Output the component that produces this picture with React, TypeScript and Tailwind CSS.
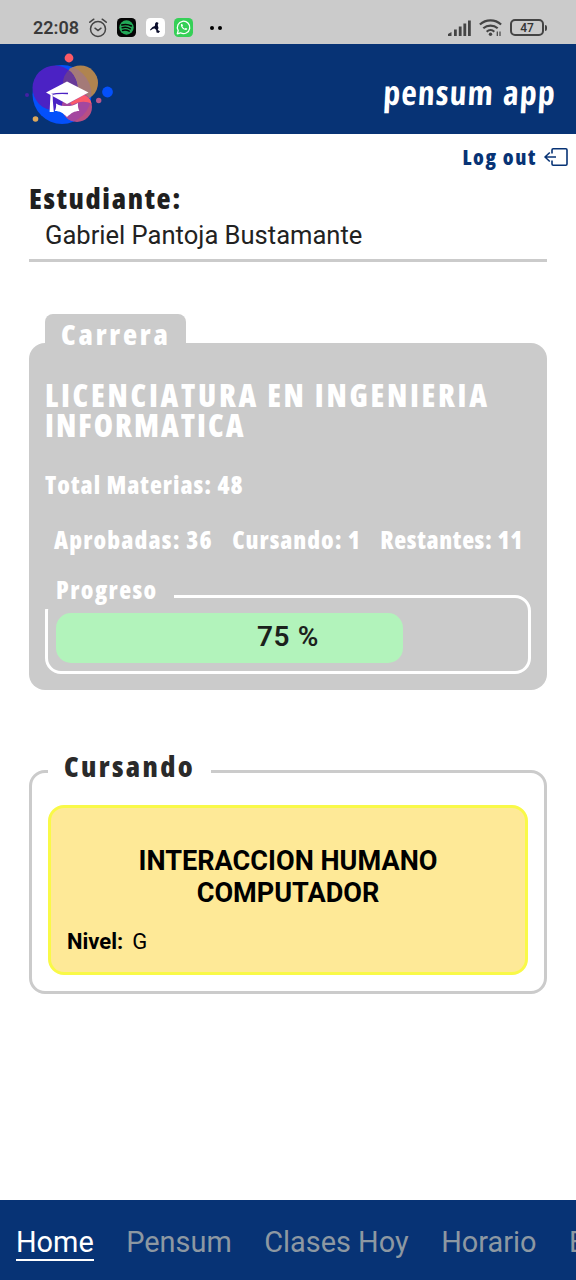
import React from 'react';

const display = "font-['Open_Sans',sans-serif] font-extrabold [font-stretch:75%] whitespace-nowrap";

function StatusBar() {
  return (
    <div className="flex h-11 items-center bg-[#cbcbcb] pl-[33px] pr-[29px] pt-[11px]">
      <span className="w-[56px] text-[18px] font-semibold leading-none text-[#3a3a3a]">22:08</span>
      <svg className="h-5 w-[18px]" viewBox="0 0 18 20" fill="none" stroke="#444" strokeWidth="1.5" strokeLinecap="round">
        <circle cx="9" cy="11" r="7.5" />
        <path d="M6 10.2l3 2.3 3-2.3M.8 4.2L4.8 1.2M17.2 4.2L13.2 1.2" />
      </svg>
      <svg className="ml-[10px] size-[19px]" viewBox="0 0 19 19" fill="none" strokeLinecap="round">
        <rect width="19" height="19" rx="4.5" fill="#050505" />
        <circle cx="9.5" cy="9.5" r="7.2" fill="#22a957" />
        <path d="M4.8 7c3.2-1 6.7-.6 9.6 1M5.2 9.8c2.8-.8 5.8-.4 8.2 1M5.6 12.4c2.4-.6 4.6-.3 6.6.8" stroke="#050505" strokeWidth="1.5" />
      </svg>
      <svg className="ml-[10px] size-[19px]" viewBox="0 0 19 19">
        <rect width="19" height="19" rx="4.5" fill="#fff" />
        <path d="M9.3 5l1.5-1 1.7 1-.8 2 .8 3-.8 2 2.3 1.2-1.5 1.8-2-.5-.3-2.5-1.500-1.500-1.700.2L4.500 12.500l-.5-.7L6.500 9l2.300-1z" fill="#0a0d2a" />
      </svg>
      <svg className="ml-[9px] size-[19px]" viewBox="0 0 19 19" fill="none" stroke="#fff">
        <rect width="19" height="19" rx="4.5" fill="#35d057" stroke="none" />
        <path d="M3.300 15.800l.9-3.300a6.200 6.200 0 1 1 2.300 2.300z" strokeWidth="1.300" strokeLinejoin="round" />
        <path d="M6.900 6.500c-.3 2.600 2.600 5.700 5.400 5.500.8-.5 1-.9.800-1.400l-1.500-.7-.8.800c-1.100-.4-1.900-1.200-2.400-2.200l.6-.8-.6-1.500c-.5-.3-1.100-.2-1.500.3z" fill="#fff" stroke="none" />
      </svg>
      <span className="ml-[17px] size-[4px] rounded-full bg-black" />
      <span className="ml-[4px] size-[4px] rounded-full bg-black" />
      <svg className="ml-auto h-4 w-[23px]" viewBox="0 0 23 16" fill="#444">
        <path d="M0 14l3.500-2v4H0zM6 9.500h2.800V16H6zM10.800 6.500h2.800V16h-2.800zM15.400 3.500h2.800V16h-2.800zM20 .5h2.800V16H20z" />
      </svg>
      <svg className="ml-[8px] h-[18px] w-[23px]" viewBox="0 0 23 18" fill="none" stroke="#444" strokeWidth="2.200">
        <path d="M.9 5.500c6-5.500 15.200-5.500 21.200 0M4.300 9.300c4.100-3.700 10.300-3.700 14.400 0M7.700 12.700c2.200-2 5.400-2 7.600 0" />
        <circle cx="11.500" cy="15.200" r="1.700" fill="#444" stroke="none" />
        <path d="M18.300 12.500V17M21 12.500V17" strokeWidth="1.200" />
      </svg>
      <div className="ml-[8px] flex h-[17px] w-[34px] items-center justify-center rounded-[5px] border-2 border-[#444] text-[12px] font-medium leading-none text-[#333]">47</div>
      <span className="ml-px h-1.5 w-0.5 rounded-r bg-[#444]" />
    </div>
  );
}

function Logo() {
  return (
    <svg className="h-[72px] w-[92px]" viewBox="24 52 92 72">
      <defs>
        <clipPath id="gold"><circle cx="80.500" cy="83" r="17.500" /></clipPath>
        <clipPath id="rose"><circle cx="77" cy="107" r="15" /></clipPath>
      </defs>
      <circle cx="62" cy="94.500" r="29.500" fill="#0450fb" />
      <circle cx="80.500" cy="83" r="17.500" fill="#b0844f" />
      <circle cx="62" cy="94.500" r="29.500" fill="#a47a78" clipPath="url(#gold)" />
      <circle cx="55" cy="88" r="22.500" fill="#4b22c4" />
      <circle cx="55" cy="88" r="22.500" fill="#683a98" clipPath="url(#gold)" />
      <circle cx="77" cy="107" r="15" fill="#b84f83" />
      <circle cx="62" cy="94.500" r="29.500" fill="#a4479f" clipPath="url(#rose)" />
      <path d="M70 103l14-8c5 2 7 5 8 9-6-3-12-3-20 1z" fill="#fb5a6a" clipPath="url(#rose)" />
      <circle cx="69" cy="58" r="4.400" fill="#fb5a66" />
      <circle cx="107.500" cy="92" r="5.400" fill="#0450fb" />
      <circle cx="98.700" cy="100.500" r="2.700" fill="#b8578c" />
      <circle cx="35.500" cy="119" r="2.800" fill="#dda85b" />
      <circle cx="27" cy="95" r="2" fill="#4421a4" />
      <path d="M46 92.500L67 81.500l21.500 11L67 104z" fill="#fff" />
      <path d="M68 93.500c-6-.3-12-.3-16 .8v3" fill="none" stroke="#4b22c4" strokeWidth="1.300" />
      <path d="M50.600 94h2l.3 7.500.9 10.500h-4.200l.5-10.500zM56 103.500c4 2.500 7 2.500 11 2.500s7-.5 11-3c-.3 3 .2 5.500 1.300 8-5 0-8 2-12.300 6-4-4-7-6-12.200-6 1.200-2.500 1.600-4.800 1.200-7.500z" fill="#fff" />
    </svg>
  );
}

function Header() {
  return (
    <header className="flex h-[90px] items-start justify-between bg-[#073375] pl-6 pr-[19px] pt-2">
      <Logo />
      <h1 className="-skew-x-3 pt-[22px] font-['Open_Sans',sans-serif] text-[34px] font-bold leading-9 tracking-[1px] whitespace-nowrap text-white [font-stretch:75%] [word-spacing:2px]">
        pensum app
      </h1>
    </header>
  );
}

function Stat({ children }: { children: React.ReactNode }) {
  return <span className={`${display} text-[24.500px] leading-[30px]`}>{children}</span>;
}

function CareerCard() {
  return (
    <section className="mt-[52px] text-white">
      <div className="ml-4 h-[29px] w-[141px] rounded-t-lg bg-[#cbcbcb] pl-[16px]">
        <h2 className={`${display} relative text-[29px] leading-[40px] tracking-[2.800px]`}>Carrera</h2>
      </div>
      <div className="h-[347px] rounded-2xl bg-[#cbcbcb] px-4 pt-[37px]">
        <h3 className={`${display} text-[31px] leading-[30px] tracking-[2.700px]`}>
          LICENCIATURA EN INGENIERIA
          <br />
          <span className="tracking-[2px]">INFORMATICA</span>
        </h3>
        <p className="mt-[30px] leading-[30px] tracking-[1px]"><Stat>Total Materias: 48</Stat></p>
        <div className="mt-[21px] flex justify-between pl-[9px] pr-[8px]">
          <span className="tracking-[1.150px]"><Stat>Aprobadas: 36</Stat></span>
          <span className="tracking-[0.950px]"><Stat>Cursando: 1</Stat></span>
          <span className="tracking-[0.650px]"><Stat>Restantes: 11</Stat></span>
        </div>
        <div className="relative mt-[39px] h-[79px] rounded-2xl border-[3px] border-white px-2 pt-[15px]">
          <div className="absolute -left-[3px] -top-[23px] h-[34px] w-[129px] bg-[#cbcbcb] pl-[11px] tracking-[1.450px]">
            <Stat>Progreso</Stat>
          </div>
          <div className="h-[50px] w-[347px] rounded-[15px] bg-[#b2f3bb]">
            <div className="w-[464px] text-center text-[28px] font-semibold leading-[47px] tracking-[0.600px] text-[#1b211c]">75 %</div>
          </div>
        </div>
      </div>
    </section>
  );
}

function CurrentCourses() {
  return (
    <section className="relative mt-[80px] h-[224px] rounded-2xl border-[3px] border-[#cbcbcb] px-4 pt-8">
      <h2 className={`${display} absolute -top-[28px] left-4 w-[163px] bg-white pl-[16px] text-[29px] leading-[42px] tracking-[2.350px] text-[#2a2a2a]`}>
        Cursando
      </h2>
      <article className="h-[170px] rounded-2xl border-[3px] border-[#f9f947] bg-[#fee997] px-4 pt-[37px] text-black">
        <h3 className="text-center text-[27.100px] font-bold leading-8">
          INTERACCION HUMANO
          <br />
          COMPUTADOR
        </h3>
        <p className="mt-[18px] text-[22px] leading-[30px]">
          <strong className="font-bold">Nivel:</strong>
          <span className="ml-[9px]">G</span>
        </p>
      </article>
    </section>
  );
}

function BottomNav() {
  return (
    <nav className="mt-auto flex h-20 shrink-0 gap-[32.500px] overflow-hidden bg-[#073375] pl-4 pt-[24px] text-[28.900px] leading-[36px] whitespace-nowrap text-[#8d98a2]">
      <a className="h-[37px] border-b-2 border-white text-white">Home</a>
      <a>Pensum</a>
      <a>Clases Hoy</a>
      <a>Horario</a>
      <a>E</a>
    </nav>
  );
}

export default function App() {
  return (
    <div className="flex h-[1280px] w-[576px] flex-col overflow-hidden bg-white font-[Roboto,sans-serif]">
      <StatusBar />
      <Header />
      <button className="mr-[8px] mt-[8px] flex h-[30px] items-center gap-[7px] self-end text-[#073375]">
        <span className={`${display} text-[21px] leading-[30px] tracking-[1.600px]`}>Log out</span>
        <svg className="h-[18px] w-6" viewBox="0 0 24 18" fill="none" stroke="currentColor" strokeWidth="1.600" strokeLinejoin="round">
          <path d="M8 5.500V2q0-1.200 1.200-1.200h12.600Q23 .8 23 2v14q0 1.200-1.200 1.200H9.200q-1.200 0-1.200-1.200v-3.500M12 9H1M5.800 4.500L1 9l4.800 4.500" />
        </svg>
      </button>
      <main className="px-[29px]">
        <h2 className={`${display} relative -top-0.5 mt-[8px] text-[29px] leading-10 tracking-[1.650px] text-[#1f1f1f]`}>Estudiante:</h2>
        <p className="h-[42px] border-b-[3px] border-[#cbcbcb] pl-4 text-[25.550px] leading-[30px] text-[#222]">Gabriel Pantoja Bustamante</p>
        <CareerCard />
        <CurrentCourses />
      </main>
      <BottomNav />
    </div>
  );
}
